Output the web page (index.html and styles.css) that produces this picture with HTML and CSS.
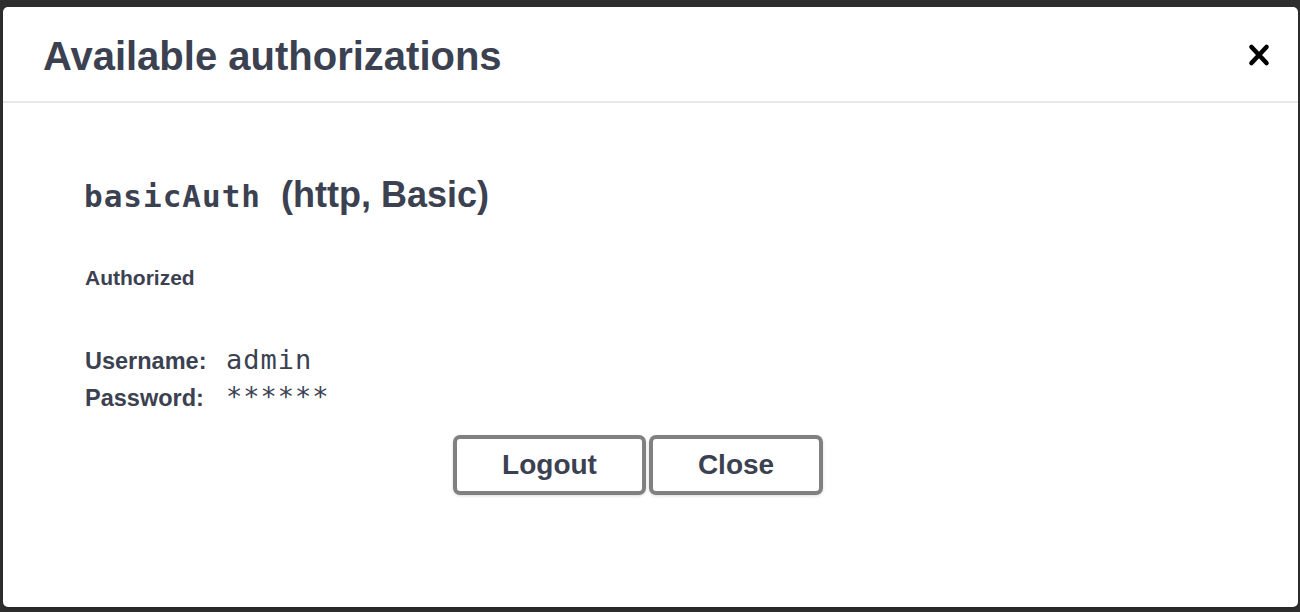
FILE: index.html
```html
<!DOCTYPE html>
<html lang="en">
<head>
<meta charset="utf-8">
<title>Available authorizations</title>
<link rel="stylesheet" href="styles.css">
</head>
<body>
<div class="backdrop">
  <div class="modal">
    <div class="modal-header">
      <h3 class="modal-title">Available authorizations</h3>
      <button class="close-btn" aria-label="Close">
        <svg width="22" height="24" viewBox="0 0 22 24"><path d="M3.5 4 L18.5 20 M18.5 4 L3.5 20" stroke="#000" stroke-width="4.6" stroke-linecap="round" fill="none"/></svg>
      </button>
    </div>
    <div class="modal-content">
      <h4 class="scheme"><code class="scheme-name">basicAuth</code>(http, Basic)</h4>
      <h6 class="status">Authorized</h6>
      <div class="cred-row"><span class="cred-label">Username:</span><code class="cred-value">admin</code></div>
      <div class="cred-row"><span class="cred-label">Password:</span><code class="cred-value">******</code></div>
      <div class="btn-wrapper">
        <button class="btn">Logout</button>
        <button class="btn btn-close">Close</button>
      </div>
    </div>
  </div>
</div>
</body>
</html>
```

FILE: styles.css
```css
html, body {
  margin: 0;
  padding: 0;
  height: 100%;
}
body {
  background: #2e2e2e;
  font-family: "Liberation Sans", Arial, sans-serif;
  color: #3b4151;
}
.backdrop {
  box-sizing: border-box;
  height: 612px;
  padding: 7px 2px 5px 3px;
}
.modal {
  background: #fff;
  border-radius: 5px;
  height: 600px;
  box-shadow: 0 2px 3px rgba(0,0,0,0.15);
  overflow: hidden;
}
.modal-header {
  display: flex;
  align-items: center;
  justify-content: space-between;
  height: 94px;
  padding: 0 28px 0 40px;
  border-bottom: 2px solid #e8e8e8;
}
.modal-title {
  margin: 0;
  font-size: 40px;
  font-weight: 700;
  color: #3b4151;
  padding-top: 5px;
}
.close-btn {
  border: 0;
  background: none;
  padding: 0;
  width: 22px;
  height: 24px;
  display: flex;
  margin-top: 2px;
}
.modal-content {
  padding: 72px 0 0 81px;
}
.scheme {
  margin: 0;
  font-size: 36px;
  font-weight: 700;
  line-height: 40px;
}
.scheme-name {
  font-family: "DejaVu Sans Mono", monospace;
  font-size: 31px;
  font-weight: 700;
  letter-spacing: 1px;
  margin-right: 20px;
}
.status {
  margin: 50px 0 0 1px;
  font-size: 21px;
  font-weight: 700;
  line-height: 24px;
}
.cred-row {
  display: flex;
  align-items: baseline;
  margin-left: 1px;
  height: 37px;
}
.status + .cred-row {
  margin-top: 54px;
}
.cred-label {
  font-size: 23.5px;
  font-weight: 700;
  width: 141px;
}
.cred-value {
  font-family: "DejaVu Sans Mono", monospace;
  font-size: 27px;
  letter-spacing: 1px;
}
.btn-wrapper {
  display: flex;
  justify-content: center;
  gap: 3px;
  padding: 17px 0 0 0;
  margin-right: 25px;
  margin-left: -81px;
}
.btn {
  font-family: "Liberation Sans", Arial, sans-serif;
  font-size: 28px;
  font-weight: 700;
  color: #3b4151;
  background: #fff;
  border: 4px solid #808080;
  border-radius: 7px;
  height: 60px;
  width: 193px;
  box-shadow: 0 1px 3px rgba(0,0,0,0.15);
  padding: 0;
}
.btn-close {
  width: 174px;
}
```
